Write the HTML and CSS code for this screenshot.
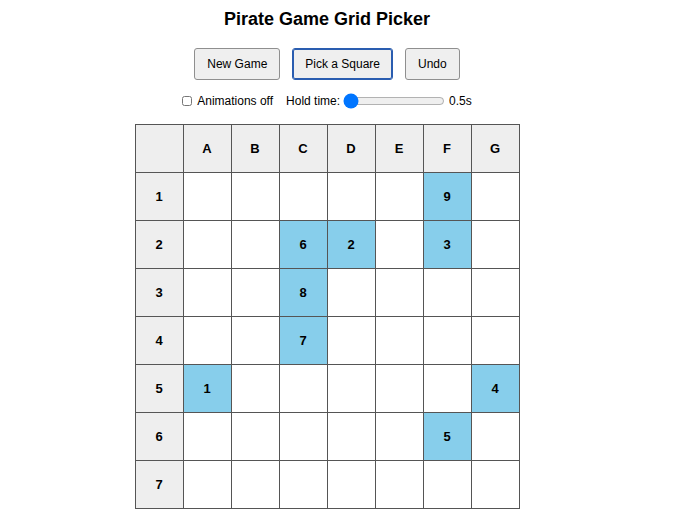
FILE: index.html
```html
<!DOCTYPE html>
<html lang="en">
<head>
    <meta charset="UTF-8">
    <meta name="viewport" content="width=device-width, initial-scale=1.0">
    <title>Pirate Game Grid Picker</title>
    <link rel="stylesheet" href="styles.css">
</head>
<body>
    <div class="app">
        <h1>Pirate Game Grid Picker</h1>

        <div class="buttons">
            <button>New Game</button>
            <button class="focused">Pick a Square</button>
            <button>Undo</button>
        </div>

        <div class="options">
            <label class="check"><input type="checkbox"> Animations off</label>
            <label class="hold">Hold time: <input type="range" min="0.5" max="3" step="0.5" value="0.5"></label>
            <span class="hold-value">0.5s</span>
        </div>

        <table class="grid">
            <tr><th></th><th>A</th><th>B</th><th>C</th><th>D</th><th>E</th><th>F</th><th>G</th></tr>
            <tr><th>1</th><td></td><td></td><td></td><td></td><td></td><td class="picked">9</td><td></td></tr>
            <tr><th>2</th><td></td><td></td><td class="picked">6</td><td class="picked">2</td><td></td><td class="picked">3</td><td></td></tr>
            <tr><th>3</th><td></td><td></td><td class="picked">8</td><td></td><td></td><td></td><td></td></tr>
            <tr><th>4</th><td></td><td></td><td class="picked">7</td><td></td><td></td><td></td><td></td></tr>
            <tr><th>5</th><td class="picked">1</td><td></td><td></td><td></td><td></td><td></td><td class="picked">4</td></tr>
            <tr><th>6</th><td></td><td></td><td></td><td></td><td></td><td class="picked">5</td><td></td></tr>
            <tr><th>7</th><td></td><td></td><td></td><td></td><td></td><td></td><td></td></tr>
        </table>
    </div>
</body>
</html>
```

FILE: styles.css
```css
body {
    margin: 0;
    font-family: Arial, "Liberation Sans", sans-serif;
    background: white;
    color: black;
}
.app {
    width: 654px;
    display: flex;
    flex-direction: column;
    align-items: center;
}
h1 {
    font-size: 18px;
    margin: 9px 0 0;
    line-height: 20px;
}
.buttons {
    display: flex;
    gap: 12px;
    margin-top: 19px;
}
.buttons button {
    font-family: Arial, "Liberation Sans", sans-serif;
    font-size: 12px;
    height: 32px;
    padding: 0 12px;
    background: #efefef;
    border: 1px solid #8f8f8f;
    border-radius: 3px;
    color: black;
}
.buttons button.focused {
    border-color: #2a5db0;
    outline: 1px solid #2a5db0;
    outline-offset: -2px;
}
.options {
    display: flex;
    align-items: center;
    margin-top: 13px;
    font-size: 12px;
    height: 16px;
}
.check {
    display: flex;
    align-items: center;
}
.check input {
    margin: 0 5px 0 0;
    width: 10px;
    height: 10px;
}
.hold {
    display: flex;
    align-items: center;
    margin-left: 13px;
}
.hold input {
    width: 102px;
    margin: 0 4px 0 3px;
}
.grid {
    border-collapse: collapse;
    margin-top: 15px;
}
.grid th,
.grid td {
    width: 47px;
    height: 47px;
    padding: 0;
    border: 1px solid #555;
    text-align: center;
    font-size: 13px;
    font-weight: bold;
}
.grid th {
    background: #eee;
}
.grid td.picked {
    background: #87ceeb;
}
```
